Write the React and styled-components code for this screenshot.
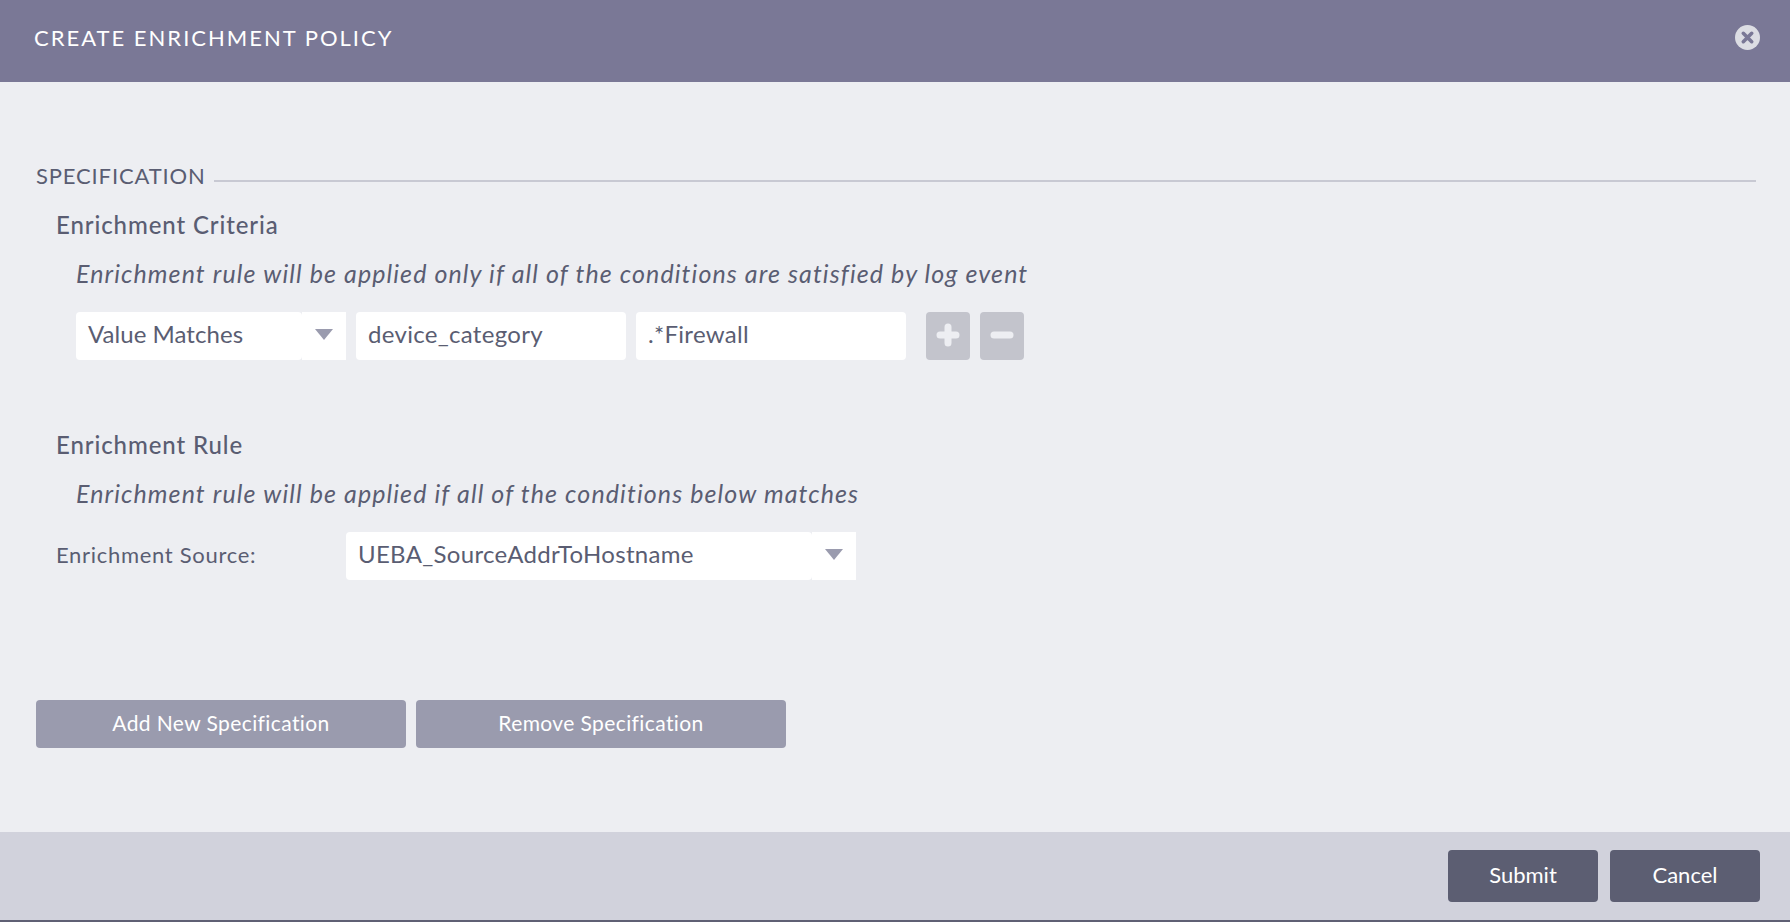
import React from "react";
import styled, { createGlobalStyle } from "styled-components";

const Global = createGlobalStyle`
  html, body { margin: 0; padding: 0; height: 100%; background: #edeef2; }
  #root { height: 100%; }
  * { box-sizing: border-box; }
`;

const Page = styled.div`
  width: 1790px;
  height: 922px;
  display: flex;
  flex-direction: column;
  font-family: Lato, "Open Sans", sans-serif;
  color: #5a5d72;
  background: #edeef2;
  overflow: hidden;
`;

const Header = styled.header`
  flex: 0 0 82px;
  background: #7a7896;
  display: flex;
  align-items: center;
  justify-content: space-between;
  padding: 0 30px 7px 34px;
`;

const Title = styled.h1`
  margin: 0;
  font-size: 22px;
  font-weight: 400;
  letter-spacing: 2px;
  color: #fff;
  text-transform: uppercase;
`;

const CloseButton = styled.button`
  width: 25px;
  height: 25px;
  padding: 0;
  border: 0;
  background: none;
  display: block;
`;

const Body = styled.main`
  flex: 1;
  padding: 78px 34px 0 36px;
`;

const Legend = styled.div`
  display: flex;
  align-items: center;
  gap: 8px;
  height: 32px;
`;

const LegendText = styled.span`
  font-size: 22px;
  letter-spacing: 0.85px;
  line-height: 32px;
`;

const LegendRule = styled.div`
  flex: 1;
  height: 2px;
  margin-top: 10px;
  background: #c8c9d3;
`;

const Section = styled.section`
  padding-left: 20px;
`;

const SectionTitle = styled.h2`
  margin: ${(p) => p.$top}px 0 0;
  font-size: 24px;
  letter-spacing: 0.9px;
  line-height: 32px;
  font-weight: 500;
  color: #5a5d72;
`;

const Hint = styled.p`
  margin: 16px 0 0 20px;
  font-size: 25px;
  letter-spacing: 1.1px;
  line-height: 32px;
  font-style: italic;
  color: #5a5d72;
`;

const ControlRow = styled.div`
  display: flex;
  align-items: center;
  gap: 10px;
  margin: 23px 0 0 20px;
`;

const Field = styled.div`
  width: ${(p) => p.$w}px;
  height: 48px;
  display: flex;
  align-items: center;
  padding: 0 0 5px 12px;
  background: #fff;
  border-radius: 4px;
  font-size: 24px;
  letter-spacing: 0.3px;
  color: #5a5d72;
`;

const SelectBox = styled.div`
  width: ${(p) => p.$w}px;
  height: 48px;
  display: flex;
`;

const SelectValue = styled.div`
  flex: 1;
  display: flex;
  align-items: center;
  padding: 0 0 5px 12px;
  background: #fff;
  font-size: 24px;
  letter-spacing: ${(p) => p.$tight ? "0.05px" : "0.3px"};
  border-radius: 4px;
`;

const SelectCaret = styled.div`
  flex: 0 0 44px;
  display: flex;
  align-items: center;
  justify-content: center;
  padding-bottom: 3px;
  background: #fff;
  &::after {
    content: "";
    border-left: 9px solid transparent;
    border-right: 9px solid transparent;
    border-top: 11px solid #9a9bae;
  }
`;

const IconGroup = styled.div`
  display: flex;
  gap: 10px;
  margin-left: 10px;
`;

const IconButton = styled.button`
  width: 44px;
  height: 48px;
  padding: 0 0 3px;
  border: 0;
  border-radius: 4px;
  background: #c3c4cc;
  display: flex;
  align-items: center;
  justify-content: center;
`;

const SourceRow = styled.div`
  display: flex;
  align-items: center;
  margin-top: 23px;
`;

const SourceLabel = styled.label`
  flex: 0 0 290px;
  font-size: 22px;
  letter-spacing: 0.7px;
  padding-bottom: 4px;
`;

const SpecActions = styled.div`
  display: flex;
  gap: 10px;
  margin-top: 120px;
`;

const SpecButton = styled.button`
  width: 370px;
  height: 48px;
  padding: 0 0 4px;
  border: 0;
  border-radius: 4px;
  background: #9a9bae;
  color: #fff;
  font: 400 21px Lato, sans-serif;
  letter-spacing: 0.4px;
`;

const Footer = styled.footer`
  flex: 0 0 90px;
  background: #d1d2dc;
  border-bottom: 2px solid #5f6074;
  display: flex;
  justify-content: flex-end;
  gap: 12px;
  padding: 18px 30px 0 0;
`;

const FooterButton = styled.button`
  width: 150px;
  height: 52px;
  padding: 0 0 3px;
  border: 0;
  border-radius: 4px;
  background: #5c5e72;
  color: #fff;
  font: 400 22px Lato, sans-serif;
`;

export default function App() {
  return (
    <Page>
      <Global />
      <Header>
        <Title>Create Enrichment Policy</Title>
        <CloseButton aria-label="Close">
          <svg width="25" height="25" viewBox="0 0 25 25">
            <circle cx="12.5" cy="12.5" r="12.5" fill="#dcdde3" />
            <path d="M8.3 8.300l8.400 8.400M16.700 8.300l-8.400 8.400" stroke="#7a7896" strokeWidth="3.6" strokeLinecap="round" />
          </svg>
        </CloseButton>
      </Header>
      <Body>
        <Legend>
          <LegendText>SPECIFICATION</LegendText>
          <LegendRule />
        </Legend>
        <Section>
          <SectionTitle $top={17}>Enrichment Criteria</SectionTitle>
          <Hint>Enrichment rule will be applied only if all of the conditions are satisfied by log event</Hint>
          <ControlRow>
            <SelectBox $w={270}>
              <SelectValue $tight>Value Matches</SelectValue>
              <SelectCaret />
            </SelectBox>
            <Field $w={270}>device_category</Field>
            <Field $w={270}>.*Firewall</Field>
            <IconGroup>
              <IconButton aria-label="Add">
                <svg width="24" height="24" viewBox="0 0 24 24">
                  <path d="M12 4v16M4 12h16" stroke="#edeef2" strokeWidth="7" strokeLinecap="round" />
                </svg>
              </IconButton>
              <IconButton aria-label="Remove">
                <svg width="24" height="24" viewBox="0 0 24 24">
                  <path d="M4 12h16" stroke="#edeef2" strokeWidth="7" strokeLinecap="round" />
                </svg>
              </IconButton>
            </IconGroup>
          </ControlRow>
          <SectionTitle $top={69}>Enrichment Rule</SectionTitle>
          <Hint>Enrichment rule will be applied if all of the conditions below matches</Hint>
          <SourceRow>
            <SourceLabel>Enrichment Source:</SourceLabel>
            <SelectBox $w={510}>
              <SelectValue>UEBA_SourceAddrToHostname</SelectValue>
              <SelectCaret />
            </SelectBox>
          </SourceRow>
        </Section>
        <SpecActions>
          <SpecButton>Add New Specification</SpecButton>
          <SpecButton>Remove Specification</SpecButton>
        </SpecActions>
      </Body>
      <Footer>
        <FooterButton>Submit</FooterButton>
        <FooterButton>Cancel</FooterButton>
      </Footer>
    </Page>
  );
}
